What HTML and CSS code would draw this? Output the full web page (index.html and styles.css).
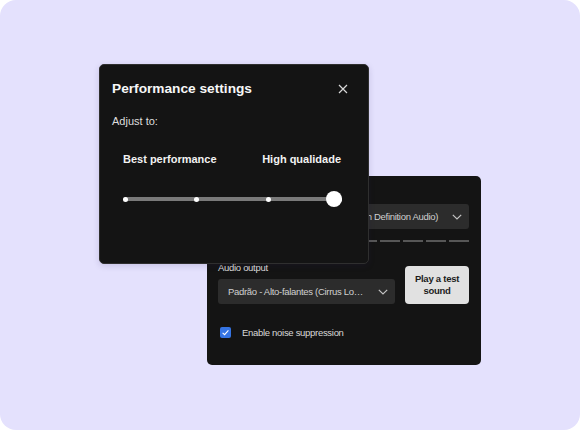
FILE: index.html
```html
<!DOCTYPE html>
<html lang="en">
<head>
<meta charset="utf-8">
<title>Performance settings</title>
<link rel="stylesheet" href="styles.css">
</head>
<body>
<div class="stage">
  <section class="panel-back">
    <div class="field-label">Microfone</div>
    <div class="select">
      <span class="select-text">Padrão - Microfone (Realtek(R) High Definition Audio)</span>
      <svg class="chevron" viewBox="0 0 10 6" width="10" height="6"><polyline points="0.8,0.8 5,5 9.2,0.8"/></svg>
    </div>
    <div class="meter">
      <span></span><span></span><span></span><span></span><span></span><span></span><span></span><span></span><span></span><span></span><span></span>
    </div>
    <div class="output-row">
      <div class="output-col">
        <div class="field-label">Audio output</div>
        <div class="select">
          <span class="select-text">Padrão - Alto-falantes (Cirrus Logic Superior High Definition Audio)</span>
          <svg class="chevron" viewBox="0 0 10 6" width="10" height="6"><polyline points="0.8,0.8 5,5 9.2,0.8"/></svg>
        </div>
      </div>
      <button class="test-btn"><span class="btn-line">Play a test</span><span class="btn-line">sound</span></button>
    </div>
    <label class="check-row">
      <span class="checkbox"><svg viewBox="0 0 11 11" width="11" height="11"><polyline points="2.6,5.8 4.6,7.6 8.4,3.4"/></svg></span>
      <span class="check-text">Enable noise suppression</span>
    </label>
  </section>

  <section class="panel-front">
    <div class="header">
      <h1 class="title">Performance settings</h1>
      <svg class="close" viewBox="0 0 10 10" width="10" height="10"><path d="M1 1 L9 9 M9 1 L1 9"/></svg>
    </div>
    <div class="adjust">Adjust to:</div>
    <div class="labels">
      <span>Best performance</span>
      <span>High qualidade</span>
    </div>
    <div class="slider">
      <div class="track"><i></i><i></i><i></i><i></i></div>
      <div class="thumb"></div>
    </div>
  </section>
</div>
</body>
</html>
```

FILE: styles.css
```css
* { box-sizing: border-box; }
html, body { margin: 0; padding: 0; background: #ffffff; }
body { font-family: "Liberation Sans", Arial, sans-serif; }

.stage {
  width: 580px;
  height: 430px;
  border-radius: 16px;
  background: #e4e1fd;
  display: grid;
  grid-template-columns: 1fr;
  grid-template-rows: 1fr;
  overflow: hidden;
}

/* back window */
.panel-back {
  grid-area: 1 / 1;
  align-self: start;
  justify-self: start;
  margin: 176px 0 0 207px;
  width: 274px;
  height: 189px;
  background: #141414;
  border-radius: 5px;
  padding: 11px 12px 0 11px;
  display: flex;
  flex-direction: column;
  font-size: 9.5px;
  letter-spacing: -0.3px;
  color: #d4d4d4;
}
.field-label {
  line-height: 11px;
  height: 11px;
  margin-bottom: 6px;
  color: #dcdcdc;
}
.select {
  height: 25px;
  background: #2c2c2c;
  border-radius: 3px;
  display: flex;
  align-items: center;
  padding: 0 7px 0 10px;
  color: #d0d0d0;
}
.select-text {
  flex: 1;
  min-width: 0;
  white-space: nowrap;
  overflow: hidden;
  text-overflow: ellipsis;
  line-height: 12px;
}
.chevron {
  flex: none;
  margin-left: 10px;
  fill: none;
  stroke: #c4c4c4;
  stroke-width: 1.2;
}
.meter {
  margin-top: 11px;
  height: 2px;
  display: flex;
  gap: 3px;
}
.meter span {
  flex: 1;
  background: #575757;
}
.output-row {
  margin-top: 20px;
  display: flex;
  align-items: flex-end;
  gap: 10px;
}
.output-col { flex: 1; min-width: 0; }
.test-btn {
  width: 64px;
  height: 38px;
  flex: none;
  border: none;
  border-radius: 4px;
  background: #e1e1e1;
  color: #1c1c1c;
  font-family: inherit;
  font-weight: bold;
  font-size: 9.5px;
  letter-spacing: -0.25px;
  padding: 0;
  display: flex;
  flex-direction: column;
  align-items: center;
  justify-content: center;
}
.btn-line {
  display: block;
  line-height: 12px;
  height: 12px;
  white-space: nowrap;
}
.check-row {
  margin: 23px 0 0 2px;
  display: flex;
  align-items: center;
  gap: 11px;
  height: 11px;
}
.checkbox {
  width: 11px;
  height: 11px;
  border-radius: 2px;
  background: #3574e3;
  display: flex;
}
.checkbox svg {
  fill: none;
  stroke: #ffffff;
  stroke-width: 1.1;
}
.check-text {
  line-height: 11px;
  color: #d8d8d8;
}

/* front window */
.panel-front {
  grid-area: 1 / 1;
  align-self: start;
  justify-self: start;
  margin: 64px 0 0 99px;
  width: 270px;
  height: 200px;
  background: #141414;
  border: 1px solid #2f2f2f;
  border-radius: 5px;
  padding: 16px 12px 0 12px;
  display: flex;
  flex-direction: column;
  color: #f4f4f4;
  box-shadow: 0 2px 6px rgba(40, 30, 90, 0.15);
}
.header {
  height: 16px;
  display: flex;
  align-items: center;
  justify-content: space-between;
}
.title {
  margin: 0;
  font-size: 13.7px;
  font-weight: bold;
  line-height: 16px;
  color: #f7f7f7;
}
.close {
  margin-right: 8px;
  fill: none;
  stroke: #d8d8d8;
  stroke-width: 1.2;
}
.adjust {
  margin-top: 18px;
  font-size: 11px;
  line-height: 13px;
  color: #dedede;
}
.labels {
  margin: 25px 15px 0 11px;
  display: flex;
  justify-content: space-between;
  font-size: 11px;
  font-weight: bold;
  line-height: 13px;
  color: #f2f2f2;
}
.slider {
  position: relative;
  margin: 25px 14px 0 11px;
  height: 16px;
  display: flex;
  align-items: center;
}
.track {
  flex: 1;
  height: 4px;
  border-radius: 2px;
  background: #7a7a7a;
  display: flex;
  align-items: center;
  justify-content: space-between;
}
.track i {
  width: 5px;
  height: 5px;
  border-radius: 50%;
  background: #ffffff;
}
.thumb {
  position: absolute;
  right: 0;
  top: 0;
  width: 16px;
  height: 16px;
  border-radius: 50%;
  background: #ffffff;
}
```
